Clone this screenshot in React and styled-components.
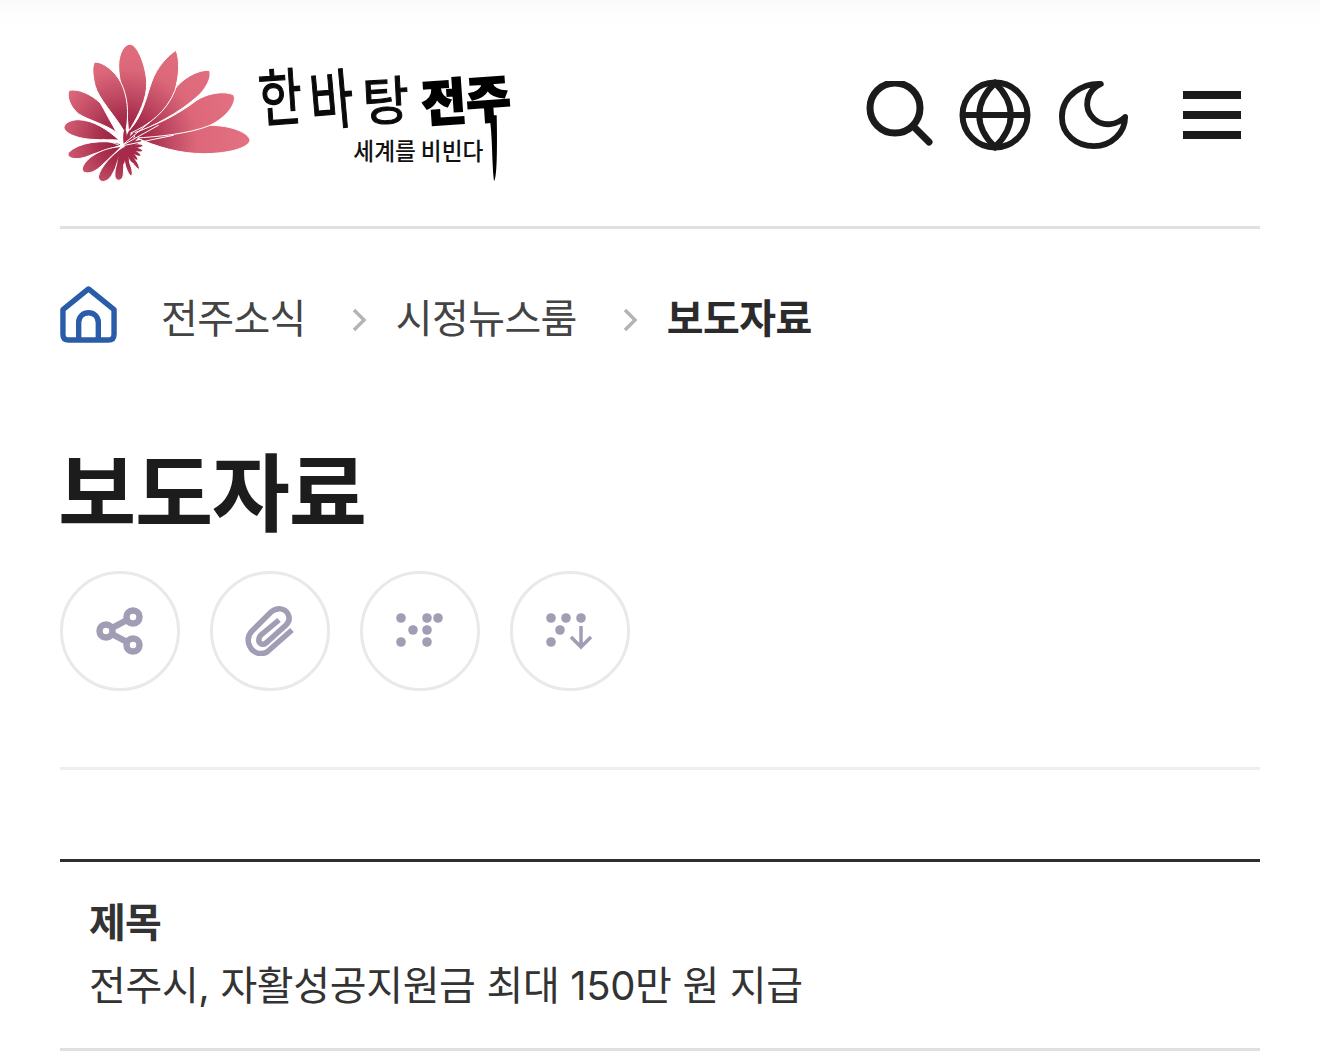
import React from "react";
import styled, { createGlobalStyle } from "styled-components";

const Global = createGlobalStyle`
  html, body { margin: 0; padding: 0; background: #fff; }
  body { font-family: Inter, "Noto Sans CJK KR", sans-serif; color: #222; overflow: hidden; }
`;
const Page = styled.div`
  width: 1320px; height: 1061px; overflow: hidden; box-sizing: border-box; padding: 0 60px;
  background: linear-gradient(#fafafa 0, #fdfdfd 12px, #fff 30px);
`;
const Header = styled.header`
  display: flex; align-items: center; justify-content: space-between;
  height: 226px; border-bottom: 3px solid #e0e0e0;
`;
const LogoWrap = styled.a`display: block; width: 460px; height: 140px; margin-top: -2px;`;
const LogoSvg = styled.svg`display: block; overflow: visible;`;
const Tools = styled.nav`display: flex; align-items: center; margin-top: 4px;`;
const ToolIcon = styled.svg`display: block; margin-left: ${p => p.$gap}px; color: #1b1b1b;`;
const Burger = styled.div`
  display: flex; flex-direction: column; gap: 12px; width: 58px; margin: 0 19px 0 54px;
`;
const BurgerBar = styled.span`display: block; height: 8px; background: #1b1b1b;`;
const Crumbs = styled.ol`
  display: flex; align-items: center; list-style: none; margin: 0; padding: 61px 0 0; height: 58px;
  font-size: 40px; letter-spacing: -0.6px; color: #444;
`;
const Home = styled.svg`display: block; margin: -10px 44px 0 0; flex: none;`;
const Crumb = styled.li`
  font-weight: ${p => (p.$current ? 700 : 400)}; color: ${p => (p.$current ? "#2b2b2b" : "#444")};
  line-height: 58px; white-space: nowrap;
`;
const Chevron = styled.svg`display: block; margin: 2px ${p => p.$right}px 0 ${p => p.$left}px; flex: none;`;
const Title = styled.h1`
  margin: 92px 0 0 -2px; font-size: 85px; line-height: 110px; font-weight: 700; color: #1c1c1c; letter-spacing: -1.3px;
`;
const Actions = styled.div`display: flex; gap: 30px; margin-top: 21px; padding-bottom: 76px; border-bottom: 3px solid #eee;`;
const RoundButton = styled.button`
  width: 120px; height: 120px; border-radius: 50%; border: 3px solid #e9e9ec; background: #fff; padding: 0;
  display: flex; align-items: center; justify-content: center; color: #a09db4;
`;
const Table = styled.section`margin-top: 89px; border-top: 3px solid #2e2e33; border-bottom: 3px solid #e0e0e0; padding: 31px 29px 30px;`;
const Label = styled.div`font-size: 40px; line-height: 60px; font-weight: 700; color: #333; letter-spacing: -0.8px;`;
const Value = styled.div`font-size: 40px; line-height: 65px; color: #333; letter-spacing: -0.35px; white-space: nowrap;`;
const BrushLight = styled.text`
  font-family: "Noto Sans CJK KR", sans-serif; font-weight: 400; font-size: 150px; fill: #0a0a0a; stroke: #0a0a0a; stroke-width: 3px;
`;
const BrushHeavy = styled.text`
  font-family: "Noto Sans CJK KR", sans-serif; font-weight: 900; font-size: 150px; fill: #000; stroke: #000; stroke-width: 5px;
`;
const Slogan = styled.text`
  font-family: "Noto Sans CJK KR", sans-serif; font-size: 72px; font-weight: 500; fill: #111;
`;

const petals = [
  "M255,315 C330,300 410,285 480,280 C540,280 595,300 600,325 C595,350 530,365 460,365 C390,365 320,345 255,315Z",
  "M250,300 C320,280 380,250 440,205 C470,185 520,175 550,188 C562,205 540,250 480,280 C420,305 320,315 255,318Z",
  "M245,295 C300,275 345,240 372,175 C395,140 445,112 478,115 C488,135 465,175 440,195 C390,240 310,285 245,305Z",
  "M238,295 C280,250 290,190 305,150 C320,105 355,70 378,55 C390,85 388,130 375,175 C350,240 295,280 238,305Z",
  "M235,292 C232,220 205,150 206,100 C207,60 225,35 242,37 C265,42 288,105 290,150 C292,200 265,250 240,292Z",
  "M228,295 C238,240 232,190 212,150 C195,118 160,90 135,90 C125,100 128,130 135,160 C145,200 195,250 222,297Z",
  "M205,305 C185,280 165,235 150,212 C120,185 85,170 58,175 C48,190 60,225 85,245 C115,265 165,275 205,305Z",
  "M208,325 C170,290 130,265 85,263 C60,263 42,275 42,287 C45,305 85,320 125,322 C160,325 190,322 208,325Z",
  "M212,335 C160,322 85,330 55,362 C48,382 85,385 115,372 C150,358 190,348 212,340Z",
  "M214,344 C170,345 110,370 97,408 C95,428 125,428 150,405 C175,382 195,362 214,344Z",
  "M216,348 C190,365 150,405 145,435 C148,455 172,452 185,430 C200,405 210,375 216,348Z",
  "M218,350 C205,380 192,410 195,435 C202,452 220,445 220,425 C222,400 222,375 218,350Z",
  "M222,350 C220,380 225,410 240,430 C250,435 248,415 240,395 C235,378 228,362 222,350Z",
  "M226,350 C235,370 245,395 265,412 C272,410 265,392 252,378 C243,368 234,358 226,350Z",
];

const Logo = () => (
  <LogoSvg viewBox="30 30 1380 420" width="460" height="140" role="img" aria-label="한바탕 전주 세계를 비빈다">
    <defs>
      <radialGradient id="petal" gradientUnits="userSpaceOnUse" cx="225" cy="325" r="345">
        <stop offset="0" stopColor="#8e1e3c" />
        <stop offset="0.22" stopColor="#a92f4d" />
        <stop offset="0.4" stopColor="#c04a63" />
        <stop offset="0.62" stopColor="#dc6779" />
        <stop offset="1" stopColor="#e27080" />
      </radialGradient>
    </defs>
    <g fill="url(#petal)" stroke="#fff" strokeWidth="3">
      {petals.map(d => <path key={d} d={d} />)}
    </g>
    <g fill="#a62a49">
      {Array.from({ length: 14 }, (_, i) => (
        <ellipse key={i} cx="252" cy="345" rx="26" ry="5.5" transform={`rotate(${i * 17 - 90} 225 345)`} />
      ))}
    </g>
    <g stroke="#fff" strokeLinecap="round" fill="none">
      <path d="M214,342 L300,270 M214,342 L325,280 M214,342 L370,310" strokeWidth="3" />
      <path d="M214,342 L190,280 M214,342 L160,322" strokeWidth="2.5" />
    </g>
    <g>
      <BrushLight transform="translate(630 270) rotate(-4) scale(0.95 1.25)">한</BrushLight>
      <BrushLight transform="translate(785 280) rotate(-5) scale(0.95 1.3)">바</BrushLight>
      <BrushLight transform="translate(940 268) rotate(-3) scale(1.02 1.05)">탕</BrushLight>
      <BrushHeavy x="1118" y="270" textLength="268" lengthAdjust="spacingAndGlyphs" transform="rotate(-4 1118 270)">전주</BrushHeavy>
      <path d="M1318,250 C1328,310 1325,390 1332,448 C1342,440 1342,330 1340,250Z" fill="#000" />
      <Slogan x="910" y="383" textLength="390" lengthAdjust="spacingAndGlyphs">세계를 비빈다</Slogan>
    </g>
  </LogoSvg>
);

const SearchIcon = () => (
  <ToolIcon $gap={0} width="68" height="68" viewBox="0 0 68 68" fill="none" stroke="currentColor" strokeWidth="7" strokeLinecap="round">
    <circle cx="29" cy="27" r="25" />
    <path d="M47 45 L63 61" />
  </ToolIcon>
);
const GlobeIcon = () => (
  <ToolIcon $gap={25} width="72" height="72" viewBox="0 0 72 72" fill="none" stroke="currentColor" strokeWidth="6">
    <circle cx="36" cy="36" r="32.5" />
    <path d="M4 36 H68 M36 4 C15 24 15 48 36 68 C57 48 57 24 36 4Z" />
  </ToolIcon>
);
const MoonIcon = () => (
  <ToolIcon $gap={28} width="70" height="70" viewBox="0 0 72 72" fill="none" stroke="currentColor" strokeWidth="6" strokeLinejoin="round" strokeLinecap="round">
    <path d="M43 4 C26 3 3 15 3 38 C3 56 18 68 36 68 C54 68 68 54 68 38 C60 46 46 49 36 40 C24 29 28 11 43 4Z" />
  </ToolIcon>
);

const HomeIcon = () => (
  <Home width="57" height="57" viewBox="0 0 58 58" fill="none" stroke="#2a5ca8" strokeWidth="5.5" strokeLinejoin="round">
    <path d="M29 3 L55 24 V49 Q55 55 49 55 H9 Q3 55 3 49 V24Z" />
    <path d="M19 55 V37 C19 24 39 24 39 37 V55" />
  </Home>
);

const Chev = ({ left, right }) => (
  <Chevron $left={left} $right={right} width="14" height="24" viewBox="0 0 14 24" fill="none" stroke="#b4b4b4" strokeWidth="3.4">
    <path d="M2 2 L12 12 L2 22" />
  </Chevron>
);

const ShareIcon = () => (
  <svg width="48" height="48" viewBox="0 0 48 48" fill="none" stroke="currentColor" strokeWidth="6.5">
    <circle cx="10" cy="24" r="6.5" /><circle cx="37" cy="10" r="6.5" /><circle cx="37" cy="38" r="6.5" />
    <path d="M16 21 L31 13 M16 27 L31 35" />
  </svg>
);
const ClipIcon = () => (
  <svg width="50" height="50" viewBox="0 0 50 50" fill="none" stroke="currentColor" strokeWidth="5.5">
    <path d="M47 24 L22 46 C14 50 6 46 3.5 37 C2.5 32 4 28 7 25 L26 6 C32 1 40 2 43 8 C45 12 44 16 41 19 L21 37 C17 40 13 37 14 33 C14 31 15 30 16 29 L34 14" />
  </svg>
);
const DotsIcon = () => (
  <svg width="48" height="48" viewBox="0 0 48 48" fill="currentColor">
    {[[5,11],[31,11],[42,11],[17,23],[31,23],[5,35],[31,35]].map(([x,y]) => <circle key={`${x}-${y}`} cx={x} cy={y} r="4.8" />)}
  </svg>
);
const DotsDownIcon = () => (
  <svg width="48" height="48" viewBox="0 0 48 48" fill="currentColor">
    {[[5,11],[20,11],[35,11],[14,23],[5,35]].map(([x,y]) => <circle key={`${x}-${y}`} cx={x} cy={y} r="4.8" />)}
    <path d="M35 19 V40 M25 30 L35 40 L45 30" fill="none" stroke="currentColor" strokeWidth="3.5" />
  </svg>
);

export default function App() {
  return (
    <Page>
      <Global />
      <Header>
        <LogoWrap><Logo /></LogoWrap>
        <Tools>
          <SearchIcon /><GlobeIcon /><MoonIcon />
          <Burger><BurgerBar /><BurgerBar /><BurgerBar /></Burger>
        </Tools>
      </Header>
      <Crumbs>
        <HomeIcon />
        <Crumb>전주소식</Crumb>
        <Chev left={46} right={30} />
        <Crumb>시정뉴스룸</Crumb>
        <Chev left={46} right={30} />
        <Crumb $current>보도자료</Crumb>
      </Crumbs>
      <Title>보도자료</Title>
      <Actions>
        <RoundButton aria-label="공유"><ShareIcon /></RoundButton>
        <RoundButton aria-label="첨부"><ClipIcon /></RoundButton>
        <RoundButton aria-label="점자"><DotsIcon /></RoundButton>
        <RoundButton aria-label="점자 내려받기"><DotsDownIcon /></RoundButton>
      </Actions>
      <Table>
        <Label>제목</Label>
        <Value>전주시, 자활성공지원금 최대 150만 원 지급</Value>
      </Table>
    </Page>
  );
}
